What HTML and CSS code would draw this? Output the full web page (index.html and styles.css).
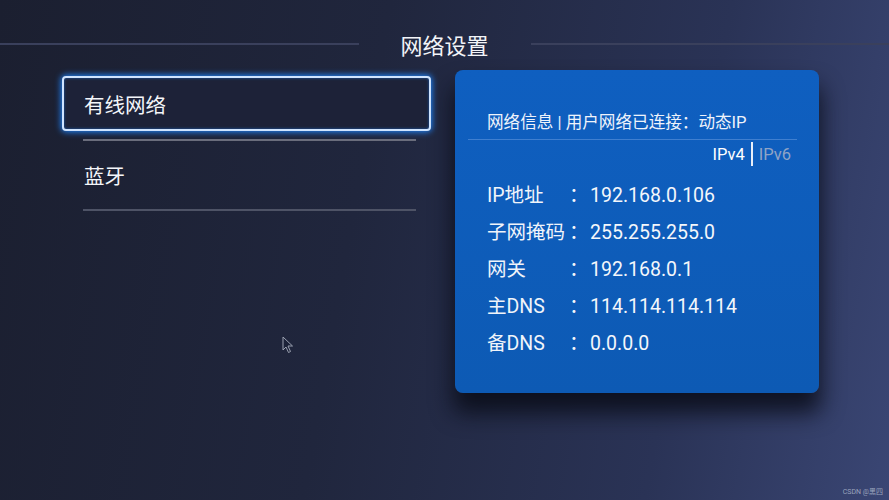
FILE: index.html
```html
<!DOCTYPE html>
<html lang="zh">
<head>
<meta charset="utf-8">
<link rel="stylesheet" href="styles.css">
</head>
<body>
<div class="screen">
  <header class="title-bar">
    <span class="rule"></span>
    <h1 class="title">网络设置</h1>
    <span class="rule"></span>
  </header>
  <main class="main">
    <nav class="menu">
      <div class="menu-item selected">有线网络</div>
      <div class="divider"></div>
      <div class="menu-item">蓝牙</div>
      <div class="divider"></div>
    </nav>
    <section class="panel">
      <div class="panel-head">网络信息 | 用户网络已连接：动态IP</div>
      <div class="panel-rule"></div>
      <div class="tabs"><span class="tab active">IPv4</span><span class="tab-sep"></span><span class="tab">IPv6</span></div>
      <dl class="info">
        <div class="row"><dt>IP地址</dt><dd><span class="colon">：</span>192.168.0.106</dd></div>
        <div class="row"><dt>子网掩码</dt><dd><span class="colon">：</span>255.255.255.0</dd></div>
        <div class="row"><dt>网关</dt><dd><span class="colon">：</span>192.168.0.1</dd></div>
        <div class="row"><dt>主DNS</dt><dd><span class="colon">：</span>114.114.114.114</dd></div>
        <div class="row"><dt>备DNS</dt><dd><span class="colon">：</span>0.0.0.0</dd></div>
      </dl>
    </section>
  </main>
  <svg class="cursor" width="12" height="18" viewBox="0 0 12 18"><path d="M1 1 L1 14 L4 11 L6.5 16.5 L8.5 15.5 L6 10 L10.5 10 Z" fill="#1c2238" stroke="#9aa0b0" stroke-width="1"/></svg>
  <div class="watermark">CSDN @黑四</div>
</div>
</body>
</html>
```
FILE: styles.css
```css
html, body {
  margin: 0;
  padding: 0;
}
body {
  font-family: Roboto, "Noto Sans CJK SC", sans-serif;
  color: #ffffff;
}
.screen {
  position: relative;
  width: 889px;
  height: 500px;
  overflow: hidden;
  background: linear-gradient(100deg, #1b1f30 0%, #20263d 40%, #2a3356 75%, #3a4674 100%);
}
.title-bar {
  display: flex;
  align-items: center;
  padding-top: 30px;
  height: 28px;
}
.rule {
  flex: 1;
  height: 2px;
  background: #3a405c;
}
.title {
  margin: 0 42px;
  font-size: 22px;
  font-weight: 400;
  line-height: 28px;
  color: #f2f4f8;
  font-family: "Noto Sans CJK SC", sans-serif;
}
.main {
  display: flex;
  align-items: flex-start;
  margin-top: 12px;
}
.menu {
  margin-left: 62px;
  margin-top: 6px;
  width: 369px;
}
.menu-item {
  box-sizing: border-box;
  height: 68px;
  padding-left: 22px;
  display: flex;
  align-items: center;
  font-size: 20.5px;
  font-family: "Noto Sans CJK SC", sans-serif;
  color: #f4f6fa;
}
.menu-item.selected {
  height: 55px;
  padding-left: 20px;
  border: 2px solid #cfe4ff;
  border-radius: 4px;
  background: #1d2238;
  box-shadow: 0 0 6px 1px #1f86ff, inset 0 0 3px rgba(31,134,255,0.6);
}
.divider {
  margin-left: 21px;
  width: 333px;
  height: 2px;
  background: #4e5366;
}
.menu-item.selected + .divider {
  margin-top: 8px;
  background: #6a6d7c;
}
.panel {
  box-sizing: border-box;
  margin-left: 24px;
  width: 364px;
  height: 323px;
  border-radius: 8px;
  background: linear-gradient(180deg, #0f5fc0 0%, #0d5ab4 100%);
  box-shadow: 0 18px 22px 2px rgba(8, 10, 20, 0.8);
  padding-top: 43px;
}
.panel-head {
  padding-left: 32px;
  font-size: 16.6px;
  line-height: 20px;
  color: #eef3fb;
}
.panel-rule {
  margin: 6px 22px 0 13px;
  height: 1px;
  background: #3f7fd0;
}
.tabs {
  display: flex;
  justify-content: flex-end;
  align-items: center;
  padding-right: 28px;
  margin-top: 2px;
  height: 24px;
  font-size: 16.5px;
}
.tab {
  color: #8fa4c6;
}
.tab.active {
  color: #ffffff;
}
.tab-sep {
  width: 2px;
  height: 24px;
  background: #e8eef8;
  margin: 0 6px 0 6px;
}
.info {
  margin: 9px 0 0 0;
  padding-left: 32px;
}
.row {
  display: flex;
  height: 37px;
  align-items: center;
  font-size: 19.5px;
}
.row dt {
  width: 82px;
  color: #f0f4fa;
}
.row dd {
  margin: 0;
  color: #f4f7fb;
}
.colon {
  display: inline-block;
  width: 21px;
}
.cursor {
  position: absolute;
  left: 282px;
  top: 336px;
}
.watermark {
  position: absolute;
  right: 6px;
  bottom: 4px;
  font-size: 7px;
  color: #9aa3bd;
}
```
